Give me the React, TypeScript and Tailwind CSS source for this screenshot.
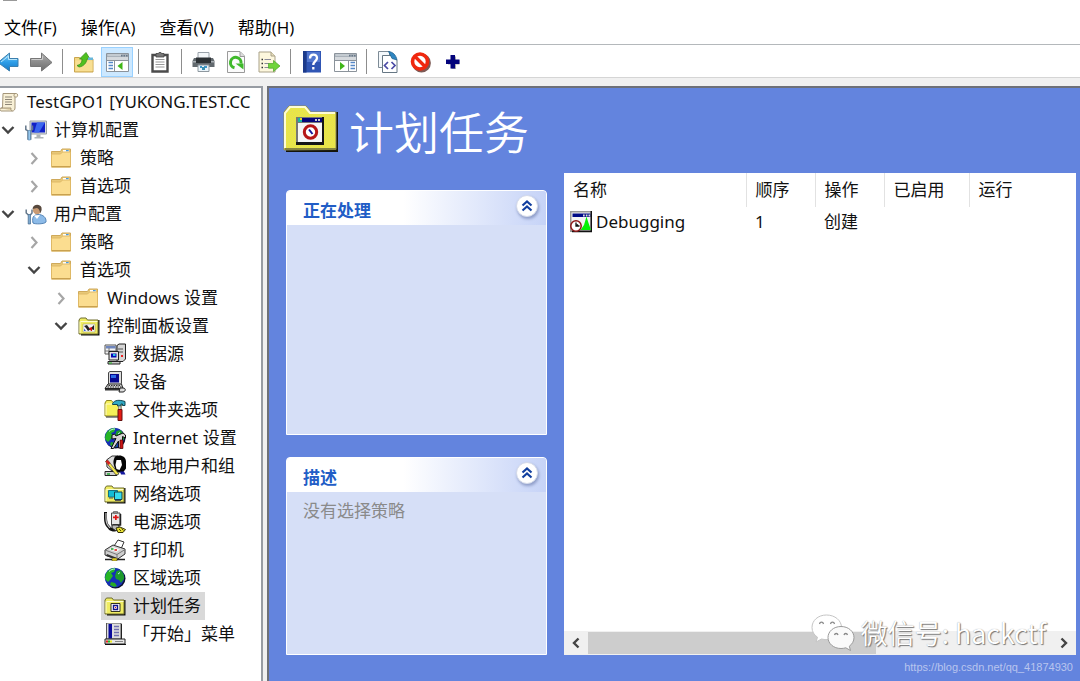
import React from "react";

type IconProps = { className?: string };

const Svg = ({ className = "size-[22px]", box = 22, children }: { className?: string; box?: number; children: React.ReactNode }) => (
  <svg viewBox={`0 0 ${box} ${box}`} className={`${className} shrink-0`} aria-hidden="true">
    {children}
  </svg>
);

/* ---------- toolbar icons ---------- */

const BackIcon = () => (
  <Svg>
    <defs>
      <linearGradient id="back" x1="0" y1="0" x2="0" y2="1">
        <stop offset="0" stopColor="#8fd3f7" />
        <stop offset="0.5" stopColor="#2f9fe8" />
        <stop offset="1" stopColor="#1777c4" />
      </linearGradient>
    </defs>
    <path d="M21 7.500v8h-8.500v4.500L1 11.500 12.500 2v5.500z" fill="url(#back)" stroke="#3b7fae" />
    <path d="M4 11 11.500 5v3.500H20" fill="none" stroke="#b9e6fb" />
  </Svg>
);

const ForwardIcon = () => (
  <Svg>
    <defs>
      <linearGradient id="fwd" x1="0" y1="0" x2="0" y2="1">
        <stop offset="0" stopColor="#b4b4b4" />
        <stop offset="0.5" stopColor="#8c8c8c" />
        <stop offset="1" stopColor="#6d6d6d" />
      </linearGradient>
    </defs>
    <path d="M.5 7.500v8h11V20L22 11.500 11.500 2v5.500z" fill="url(#fwd)" stroke="#777" />
    <path d="M1.500 8.500h11V5" fill="none" stroke="#ccc" />
  </Svg>
);

const UpFolderIcon = () => (
  <Svg>
    <path d="M1.500 6.500h5l2 1.500h11.500v13H1.500z" fill="#f3d680" stroke="#c9a54e" />
    <path d="M2.500 9.500h17v10.500h-17z" fill="#f8df93" />
    <path d="M4 14.500c4-1 5-3.500 5-6.500H6.500L13 1.500 17 8h-3c-.5 4-3.500 7.500-8 8z" fill="#4fc11f" stroke="#3b8f1e" strokeWidth=".8" />
    <path d="M15 6.500h5V9h-5z" fill="#69b6d9" />
  </Svg>
);

const PaneFrame = ({ flip }: { flip?: boolean }) => (
  <Svg className="size-[23px]" box={23}>
    <path d="M.5 3.500h22v18H.5z" fill="#fff" stroke="#8b939b" />
    <path d="M1 4h21v3.500H1z" fill="#a9b1b9" />
    <path d="M1.500 4.500H15v1H1.500z" fill="#dfe4e8" />
    <path d="M15 5h1.500v1.500H15zM17.500 5H19v1.500h-1.500zM20 5h1.500v1.500H20z" fill="#667788" />
    <path d="M1 8h21v2H1z" fill="#d5d9dd" />
    {flip ? (
      <>
        <path d="M14.500 10v11M1 10.500h21" stroke="#8b939b" />
        <path d="M6 12v8l5-4z" fill="#3fb618" />
        <path d="M16.500 12.500H21M16.500 15.500H21M16.500 18.500H21" stroke="#5689c8" strokeWidth="1.500" />
      </>
    ) : (
      <>
        <path d="M8.500 10v11M1 10.500h21" stroke="#8b939b" />
        <path d="M16.500 12v8l-5-4z" fill="#3fb618" />
        <path d="M2.500 12.500H7M2.500 15.500H7M2.500 18.500H7" stroke="#5689c8" strokeWidth="1.500" />
      </>
    )}
  </Svg>
);

const ClipboardIcon = () => (
  <Svg>
    <path d="M3.500 4h15v16.500h-15z" fill="#fff" stroke="#4b4b4b" strokeWidth="2.400" />
    <path d="M7 2.500h2.500l.5-1h2l.5 1H15V6H7z" fill="#777" stroke="#444" strokeWidth=".8" />
    <path d="M6.500 8.500h9M6.500 11h9M6.500 13.500h9M6.500 16h9" stroke="#999" />
  </Svg>
);

const PrinterIcon = () => (
  <Svg className="size-[23px]" box={23}>
    <path d="M6 2.500h11V10H6z" fill="#f4f7f9" stroke="#9aa2aa" />
    <path d="M2 8h19l1.500 3v6h-22v-6z" fill="#62696e" />
    <path d="M1 11h21v1.500H1z" fill="#aab0b5" />
    <path d="M4 7.500h15V13H4z" fill="#2c3134" />
    <path d="M6 15h11v6.500H6z" fill="#eaf4fa" stroke="#8e989f" />
    <path d="M8 16h2v2H8zM12 16h3v2h-3z" fill="#3f97c9" />
    <path d="M10 17h3v3h-3z" fill="#3a8fb0" />
  </Svg>
);

const RefreshIcon = () => (
  <Svg>
    <path d="M2.500 .500h12.500l4.500 4.500v16.500h-17z" fill="#fbfbfb" stroke="#9a9a9a" />
    <path d="M15 1v4.500h4.500" fill="#ddd" stroke="#9a9a9a" />
    <path d="M9.500 16.800A5.300 5.300 0 1 1 16 12.500" fill="none" stroke="#3fb92b" strokeWidth="3" />
    <path d="M10.500 12.500h8v6z" fill="#3fb92b" />
  </Svg>
);

const ExportIcon = () => (
  <Svg>
    <path d="M1 1h12l4 4v16H1z" fill="#fdf7dd" stroke="#a9a188" />
    <path d="M13 1v4h4" fill="#e6ddbb" stroke="#a9a188" />
    <path d="M3.500 8.500H5M3.500 12.500H5M3.500 16.500H5" stroke="#333" strokeWidth="1.400" />
    <path d="M6.500 8.500H13M6.500 12.500H11M6.500 16.500H12" stroke="#8a8a99" strokeWidth="1.200" />
    <path d="M10.500 12.500h5V9.500l6.500 5.500-6.500 5.500v-3.300h-5z" fill="#6fd43a" stroke="#4aa526" strokeWidth=".7" />
  </Svg>
);

const HelpIcon = () => (
  <Svg>
    <path d="M2 0h18v21.500H2z" fill="#2f55b4" />
    <path d="M2 0h3.500v21.500H2z" fill="#1c3a8a" />
    <path d="M6 1h13v10H6z" fill="#5277cf" />
    <path d="M9 7.500C9 2.500 16 2.500 16 7c0 3-3.700 3.300-3.700 7M12.300 16v2.400" fill="none" stroke="#fff" strokeWidth="2.300" />
  </Svg>
);

const CodeDocIcon = () => (
  <Svg>
    <path d="M1.500.5h11v16h-11z" fill="#f4f8fb" stroke="#7d8b96" />
    <path d="M5.500 4.500h10l4.500 4.500v12.500H5.500z" fill="#fff" stroke="#667784" />
    <path d="M11.500.500C16 1 19 4 20 9l-5-1.500z" fill="#2f86c2" stroke="#27648f" strokeWidth=".8" />
    <path d="m11 11-3.500 3.500L11 18M14.500 11l3.500 3.500-3.500 3.500" fill="none" stroke="#4a4aa5" strokeWidth="1.700" />
  </Svg>
);

const BanIcon = () => (
  <Svg>
    <circle cx="11.500" cy="12" r="7.800" fill="none" stroke="#7d5a55" strokeWidth="3.200" />
    <circle cx="10" cy="10.500" r="7.500" fill="#fff" stroke="#f0280f" strokeWidth="3.600" />
    <path d="m5 5.500 10 10" stroke="#f0280f" strokeWidth="3.400" />
  </Svg>
);

const PlusIcon = () => (
  <Svg>
    <path d="M8.500 5.500H13V9h3.500v4.500H13V18H8.500v-4.500H5V9h3.500z" fill="#aaa" />
    <path d="M7.500 4H12v4.500h4.500V13H12v4.500H7.500V13H3V8.500h4.500z" fill="#04047c" />
  </Svg>
);

/* ---------- tree icons ---------- */

const ScrollIcon = () => (
  <Svg className="size-5" box={20}>
    <path d="M3 1.500h13.500c1.500 0 1.500 3.500 0 3.500H15v11c0 1.500-1 3-2.500 3H1c-1.500-.5-1.500-3 0-3h1.500z" fill="#f8f0d6" stroke="#a4967a" />
    <path d="M14.500 2c-1 1-.5 3 .5 3" fill="none" stroke="#a4967a" />
    <path d="M1 16h10c-.5 1.500 0 3 1.500 3" fill="#e2d3aa" stroke="#a4967a" />
    <path d="M5 5h7M5 7.500h7M5 10h7M5 12.500h7" stroke="#8d8676" />
  </Svg>
);

const FolderIcon = () => (
  <Svg>
    <path d="M.5 4.500h9L11 2h8.500v18H.5z" fill="#e8c878" stroke="#cfa95a" />
    <path d="M12 3h6v2h-6z" fill="#fff" />
    <path d="M15 3h2.700v1.300H15z" fill="#4a9be0" />
    <path d="M.5 7h9l2-2h8v15H.5z" fill="#fbdd90" stroke="#dfb966" />
    <path d="M1 19.500h18.500" stroke="#c9a14f" />
  </Svg>
);

const ComputerIcon = () => (
  <Svg>
    <path d="M5 2h16.500v13H5z" fill="#d6dadd" stroke="#9aa1a6" />
    <path d="M6.500 3.500H20v10H6.500z" fill="#1020c8" />
    <path d="M12 3.500h8L14 13.500H9z" fill="#3a66ee" />
    <path d="M11.500 15.500h4V18h3v1.500h-9V18h2z" fill="#aeb4b7" />
    <path d="M.8 6.500v4L3 12v8h2.700v-8l1.800-1.500v-4" fill="none" stroke="#65788b" strokeWidth="1.500" />
    <path d="M3.200 11.500h2.200V21H3.200z" fill="#9ccdf2" stroke="#4f83b0" strokeWidth=".6" />
  </Svg>
);

const UserIcon = () => (
  <Svg>
    <path d="M8 20c-1.500-7 2-8.500 5-8.500 5 0 8.500 3 8 7.500-1 2-11 2.500-13 1z" fill="#8dbbe8" stroke="#5484b6" />
    <path d="m9 12.500 3 3.500 3-4z" fill="#fff" />
    <circle cx="12" cy="7" r="4.200" fill="#c99b74" />
    <path d="M7.500 6C8 1 15 .5 16.500 4.500c.5 3-.5 4.500-1.500 6 0-3-1-4.500-3-5.500z" fill="#57483d" />
    <path d="M1.200 6.500V10L3.500 12M7 6.500V10l-1.700 2" fill="none" stroke="#65788b" strokeWidth="1.500" />
    <path d="M3.200 11.500h2.300V21H3.200z" fill="#7da9cf" stroke="#42678b" strokeWidth=".7" />
  </Svg>
);

const YellowFolder = ({ children }: { children?: React.ReactNode }) => (
  <>
    <path d="M3 5h18.500v15.500H3z" fill="#111" />
    <path d="M1 19V5l1.500-2H8l1.500 2H20v14z" fill="#efec62" stroke="#6e6d30" />
    <path d="M2.500 6.500h17M2 6.500V18" stroke="#fdfdd0" />
    {children}
  </>
);

const ControlPanelIcon = () => (
  <Svg>
    <YellowFolder>
      <path d="M5 9h12v8H5z" fill="#f4f4f4" stroke="#99994f" strokeWidth=".5" />
      <path d="m6 11 3-1 3 4 4-4v5l-3-1-3 2-2-3z" fill="#222" />
      <path d="m11 13 2 3h1v-4z" fill="#d91111" />
      <path d="M6 13.500 8 16H6z" fill="#2b5bd7" />
    </YellowFolder>
  </Svg>
);

const DatabaseIcon = () => (
  <Svg>
    <path d="M1 2h11v9H1z" fill="#f4f4f4" stroke="#555" />
    <path d="M2 3h9.500v2.500H2z" fill="#6f86bd" />
    <path d="M1 8h11M5 5v6" stroke="#777" />
    <path d="M13 2.500 15 1h6.500v15L19 18.500h-6z" fill="#d5d5d5" stroke="#222" />
    <path d="M14 6h5M14 9h5" stroke="#555" />
    <path d="M17 12h2v2h-2z" fill="#e22" />
    <path d="M5 8.500h9.500v8.500H5z" fill="#e2e2e2" stroke="#222" />
    <path d="M7 10.500h5.500v4H7z" fill="#0808b4" />
    <path d="M9 11h2.500v2H9z" fill="#29c6e6" />
    <path d="M4 18.500h12v2.500H4z" fill="#c9c9c9" stroke="#222" />
    <path d="M5 20h3" stroke="#25bb25" />
  </Svg>
);

const DeviceIcon = () => (
  <Svg>
    <path d="M4.500 1.500 6 .5h11.500v12l-1.500 1.500H4.500z" fill="#ddd" stroke="#444" />
    <path d="M6 3h9v8.500H6z" fill="#07078f" />
    <path d="M7 4h5v3H7z" fill="#2a69e8" />
    <path d="M1 17.500 4 13h13.500l1.500 4.500H1z" fill="#d1d1d1" stroke="#222" />
    <path d="M4.500 14.500H17M3.500 16H18" stroke="#333" strokeDasharray="1.500 1" />
    <path d="M1 18h18v1.500H1z" fill="#333" />
    <path d="M16 17h3c3 0 3 3.500 0 4h-4z" fill="#ddd" stroke="#222" />
  </Svg>
);

const FolderOptionsIcon = () => (
  <Svg>
    <path d="M1 17V4l1.500-2.500h5L9 3.500h8V17z" fill="#f5f05a" stroke="#8e861c" />
    <path d="M2 5h14M2 5v11" stroke="#fffcc8" />
    <path d="M2 18h13" stroke="#222" />
    <path d="M8.500 4.500C10.500 1 15 .5 21 2.500v4h-2.500V5H17v2h-3.500V5.500H8.500z" fill="#31a9c4" stroke="#124650" />
    <path d="M14.500 7h2.500v5h-2.500z" fill="#ccc" stroke="#555" strokeWidth=".6" />
    <path d="M14 10.500h4v11h-4z" fill="#e31b13" stroke="#661010" />
  </Svg>
);

const Globe = () => (
  <>
    <circle cx="11.500" cy="11.500" r="10" fill="#0c1030" />
    <circle cx="10.500" cy="10.500" r="9.800" fill="#1430b8" />
    <path d="M1.500 8c2-5 6-7.500 10-6.500L10 5 7 6l2 3-3 4-2 2-3-3z" fill="#27b527" />
    <path d="m12.500 4 4-1c3 3 4 6 3.500 9l-3 4-2-3-3-1-1-3z" fill="#1d9a2c" />
    <path d="m7 15 4 1 2 3-3 1-4-2z" fill="#25aa25" />
    <path d="M5 4.500C7 2.500 9 2 11 2M14 7l2-1.500" fill="none" stroke="#bff7e2" />
  </>
);

const InternetIcon = () => (
  <Svg>
    <Globe />
    <path d="M8 12V8l2.500-1L12 9l7-3 2.500 2v3l-3-1.500V21h-4V14l-5 7.500H7l5-10z" fill="#d4d4d4" stroke="#111" />
    <path d="M16 13h3v8.500h-3z" fill="#cb1515" stroke="#400" strokeWidth=".6" />
  </Svg>
);

const UsersIcon = () => (
  <Svg>
    <path d="M2.500 5 8 1h6l-3 6 1 6-4 3-5-4z" fill="#ddd" stroke="#333" />
    <path d="M11 1.500c5-2.500 11-.5 11 5v7l-3 4h-7l-1-4c-1-3-3-6 0-12z" fill="#050505" />
    <path d="M12.500 5h4.500l1 5-2.500 5-3-1-1-4z" fill="#fff" />
    <path d="M1 16.500h10l2 4H1z" fill="#cfcfcf" stroke="#222" />
    <path d="M1.500 6.500 3.500 5 15 19l-3 1z" fill="#f5e94c" stroke="#333" strokeWidth=".7" />
    <path d="m1.500 6.500 2-1.500 3 3-2 2z" fill="#d32222" />
    <path d="M16 16.500h4l1.500 3H17z" fill="#1518a0" />
    <path d="M3 19h3" stroke="#26a835" strokeWidth="1.500" />
  </Svg>
);

const NetworkIcon = () => (
  <Svg>
    <YellowFolder>
      <path d="M4.500 7.500h9V14h-9z" fill="#12bcd4" stroke="#157080" />
      <path d="M10.500 9h7.500v7.500h-7.500z" fill="#35dced" stroke="#13414c" />
      <path d="M5 15h4M11 17.500h6" stroke="#555" />
    </YellowFolder>
  </Svg>
);

const PowerIcon = () => (
  <Svg>
    <path d="M1.500 1v6c0 8 3 8 4 10s3 2 6 2" fill="none" stroke="#111" strokeWidth="3" />
    <path d="M2 2v5c0 8 3 8 4 10" fill="none" stroke="#c8c8c8" strokeWidth="1.200" />
    <path d="M7.500 2h8.500v12H7.500z" fill="#e6e6e6" stroke="#444" />
    <path d="M9.500.5h4V2h-4z" fill="#aaa" stroke="#444" strokeWidth=".6" />
    <path d="M16.500 3v11H9" fill="none" stroke="#222" strokeWidth="1.500" />
    <path d="M11 4h1.700v1.500h2v1.700h-2V9H11V7.200H9V5.500h2z" fill="#de1515" />
    <path d="M8 14h6l2 3-4 3-4-3z" fill="#bbb" stroke="#222" />
    <path d="m12 17 4-1 5.500 2.500L19 21.500h-5z" fill="#e7df33" stroke="#35330d" />
    <path d="m15 18 2 2M17.500 17.500l2 2" stroke="#554f00" />
  </Svg>
);

const PrinterClassicIcon = () => (
  <Svg>
    <path d="m10 7 4-6 6 2-3 7z" fill="#fff" stroke="#333" />
    <path d="M1 11 9 6l12 4v5l-8 5.500L1 16z" fill="#cfcfcf" stroke="#333" />
    <path d="m1 11 12 4.500 8-5M13 15.500V20" fill="none" stroke="#777" />
    <path d="m3 15 9 3.500v2L2 17z" fill="#333" />
    <path d="M5 10.500 9 8l7 2.500L12.500 13z" fill="#f6f6f6" />
    <path d="M7 10h2.500" stroke="#27a935" strokeWidth="1.600" />
    <path d="M10.500 11H13" stroke="#d22" strokeWidth="1.600" />
    <path d="M1 20.500h20" stroke="#222" strokeWidth="1.500" />
    <path d="M8 19h5v3H8z" fill="#ddca20" stroke="#333" strokeWidth=".5" />
  </Svg>
);

const RegionIcon = () => (
  <Svg>
    <Globe />
  </Svg>
);

const TasksIcon = () => (
  <Svg>
    <YellowFolder>
      <path d="M7 8.500h9v8H7z" fill="#fff" stroke="#332" />
      <path d="M9.500 10.500h4v4h-4z" fill="#fff" stroke="#14148a" strokeWidth="1.400" />
      <path d="M11 12h1v1h-1z" fill="#d11" />
    </YellowFolder>
  </Svg>
);

const StartMenuIcon = () => (
  <Svg>
    <path d="M2.500 0H17v16H2.500z" fill="#dedede" stroke="#555" />
    <path d="M4.500 1H8v14.500H4.500z" fill="#0b0b9b" />
    <path d="M10 3.500h5M10 6.500h5M10 9.500h5M10 12.500h5" stroke="#7070b0" strokeWidth="1.400" />
    <path d="M17.500 1v15" stroke="#222" />
    <path d="M1 16h20v5H1z" fill="#e7e7e7" stroke="#222" />
    <path d="M2 17.500h2v2H2z" fill="#e22" />
    <path d="M4 17.500h2v2H4z" fill="#2b2" />
    <path d="M6 17.500h2v2H6z" fill="#ee2" />
    <path d="M11 18.500h8" stroke="#888" />
    <path d="M1 21.500h21" stroke="#111" />
  </Svg>
);

const TaskItemIcon = () => (
  <Svg>
    <path d="M0 0h22v21H0z" fill="#999" />
    <path d="M1.500 1.500h19V19h-19z" fill="#f4f4f4" />
    <path d="M2.500 2.500h18v3.500h-18z" fill="#000a86" />
    <path d="M13 3.500h1.700v2H13zM15.800 3.500h1.700v2h-1.700zM18.500 3.500H20v2h-1.500z" fill="#ddd" />
    <path d="M21.300 0v20.500H2" fill="none" stroke="#111" strokeWidth="1.500" />
    <path d="m16.500 5.500 1.500 5 3 8.500H10.500l3.500-5z" fill="#05f205" />
    <circle cx="6" cy="15" r="5.200" fill="#fff" stroke="#8d1616" strokeWidth="1.500" />
    <path d="M6 11.500V15h3.500M6 15l2-1.500" fill="none" stroke="#111" strokeWidth="1.300" />
  </Svg>
);

const BigTaskFolder = () => (
  <svg viewBox="0 0 56 50" className="h-[50px] w-14 shrink-0" aria-hidden="true">
    <defs>
      <pattern id="dither" width="2" height="2" patternUnits="userSpaceOnUse">
        <path d="M0 0h2v2H0z" fill="#f2ee34" />
        <path d="M0 0h1v1H0zM1 1h1v1H1z" fill="#dedb60" />
      </pattern>
    </defs>
    <path d="M3 8h52v40H3z" fill="#14140a" />
    <path d="M1 46V8l5-6h17l5 6h25v37.500z" fill="url(#dither)" stroke="#8d8b58" />
    <path d="M2 44V9l5-6h15l5 6h25" fill="none" stroke="#fdfcd6" strokeWidth="2" />
    <path d="M2 45h51" stroke="#86843f" strokeWidth="2" />
    <path d="M13 13h28v28H13z" fill="#151515" />
    <path d="M13 13h26v25H13z" fill="#777" />
    <path d="M15 14h24v4H15z" fill="#05057a" />
    <path d="M15 14h4v4h-4z" fill="#18b6a0" />
    <path d="M17 14h2v2h-2z" fill="#e7d823" />
    <path d="M32 15h2v2h-2zM35 15h2v2h-2z" fill="#ccc" />
    <path d="M15 19h24v19H15z" fill="#f6f6f6" />
    <circle cx="27.500" cy="28" r="6.200" fill="#fff" stroke="#b51616" strokeWidth="3" />
    <path d="m26 25.500 3.500 4.500" fill="none" stroke="#15159a" strokeWidth="2" />
  </svg>
);

/* ---------- shared parts ---------- */

const Chevron = ({ open }: { open: boolean }) => (
  <svg viewBox="0 0 16 16" className="size-4 shrink-0" aria-hidden="true">
    {open ? (
      <path d="m2.500 5 5.500 5.500L13.500 5" fill="none" stroke="#444" strokeWidth="2.400" />
    ) : (
      <path d="m5.500 3 5 5.500-5 5.500" fill="none" stroke="#a6a6a6" strokeWidth="2.200" />
    )}
  </svg>
);

type Node = { label: string; icon: React.FC<IconProps>; level: 0 | 1 | 2 | 3; open?: boolean; selected?: boolean };

const nodes: Node[] = [
  { label: "计算机配置", icon: ComputerIcon, level: 0, open: true },
  { label: "策略", icon: FolderIcon, level: 1, open: false },
  { label: "首选项", icon: FolderIcon, level: 1, open: false },
  { label: "用户配置", icon: UserIcon, level: 0, open: true },
  { label: "策略", icon: FolderIcon, level: 1, open: false },
  { label: "首选项", icon: FolderIcon, level: 1, open: true },
  { label: "Windows 设置", icon: FolderIcon, level: 2, open: false },
  { label: "控制面板设置", icon: ControlPanelIcon, level: 2, open: true },
  { label: "数据源", icon: DatabaseIcon, level: 3 },
  { label: "设备", icon: DeviceIcon, level: 3 },
  { label: "文件夹选项", icon: FolderOptionsIcon, level: 3 },
  { label: "Internet 设置", icon: InternetIcon, level: 3 },
  { label: "本地用户和组", icon: UsersIcon, level: 3 },
  { label: "网络选项", icon: NetworkIcon, level: 3 },
  { label: "电源选项", icon: PowerIcon, level: 3 },
  { label: "打印机", icon: PrinterClassicIcon, level: 3 },
  { label: "区域选项", icon: RegionIcon, level: 3 },
  { label: "计划任务", icon: TasksIcon, level: 3, selected: true },
  { label: "「开始」菜单", icon: StartMenuIcon, level: 3 },
];

const indents = ["pl-0", "pl-[26px]", "pl-[53px]", "pl-[79px]"];

const TreeRow = ({ node }: { node: Node }) => {
  const Icon = node.icon;
  return (
    <li className={`flex h-7 items-center gap-1.5 ${indents[node.level]}`}>
      {node.open === undefined ? (
        <span className="w-4 shrink-0" />
      ) : (
        <button type="button" aria-label={`${node.open ? "折叠" : "展开"} ${node.label}`} className="shrink-0">
          <Chevron open={node.open} />
        </button>
      )}
      <button
        type="button"
        className={`flex h-7 items-center gap-[7px] pr-1 pl-[3px] whitespace-nowrap ${node.selected ? "bg-[#d9d9d9]" : ""}`}
      >
        <Icon />
        <span>{node.label}</span>
      </button>
    </li>
  );
};

const tools: ({ label: string; icon: React.ReactNode; active?: boolean } | null)[] = [
  { label: "后退", icon: <BackIcon /> },
  { label: "前进", icon: <ForwardIcon /> },
  null,
  { label: "上一级", icon: <UpFolderIcon /> },
  { label: "显示/隐藏控制台树", icon: <PaneFrame />, active: true },
  null,
  { label: "粘贴", icon: <ClipboardIcon /> },
  null,
  { label: "打印", icon: <PrinterIcon /> },
  { label: "刷新", icon: <RefreshIcon /> },
  { label: "导出列表", icon: <ExportIcon /> },
  null,
  { label: "帮助", icon: <HelpIcon /> },
  { label: "显示/隐藏操作窗格", icon: <PaneFrame flip /> },
  null,
  { label: "显示 XML", icon: <CodeDocIcon /> },
  { label: "禁用", icon: <BanIcon /> },
  { label: "新建", icon: <PlusIcon /> },
];

const Panel = ({ title, className, children }: { title: string; className: string; children?: React.ReactNode }) => (
  <section className={`flex flex-col overflow-hidden rounded-t border border-white bg-[#d6dff7] ${className}`}>
    <header className="flex h-[34px] shrink-0 items-start justify-between bg-linear-to-r from-white from-45% to-[#c6d3f7] pr-2 pl-4">
      <h2 className="pt-2 text-[17px] leading-6 font-bold text-[#215dc6]">{title}</h2>
      <button
        type="button"
        aria-label={`折叠 ${title}`}
        className="mt-1 flex size-[22px] items-center justify-center rounded-full border border-[#d5dbea] bg-white shadow-[1px_2px_3px_#8f9dc8]"
      >
        <svg viewBox="0 0 14 14" className="size-[14px]" aria-hidden="true">
          <path d="m2.500 6.500 4.500-4 4.500 4M2.500 11.500l4.500-4 4.500 4" fill="none" stroke="#123f9f" strokeWidth="2.200" />
        </svg>
      </button>
    </header>
    <div className="px-4 pt-[7px] text-[17px] leading-6 text-[#8a8a8a]">{children}</div>
  </section>
);

const columns = ["名称", "顺序", "操作", "已启用", "运行"];

const ScrollArrow = ({ d }: { d: string }) => (
  <svg viewBox="0 0 12 12" className="size-3" aria-hidden="true">
    <path d={d} fill="none" stroke="#444" strokeWidth="2.400" />
  </svg>
);

export default function App() {
  return (
    <div className="flex min-h-screen flex-col bg-[#f0f0f0] font-['Noto_Sans','Noto_Sans_CJK_SC',sans-serif] text-[17px] text-[#111]">
      <div className="bg-white">
        <div className="ml-[3px] h-px w-3.5 bg-[#999]" />
        <nav className="flex h-[43px] items-end gap-6 px-1 pb-1 font-['Open_Sans','Noto_Sans_CJK_SC',sans-serif] leading-6 text-black">
          {["文件(F)", "操作(A)", "查看(V)", "帮助(H)"].map((m) => (
            <button key={m} type="button">
              {m}
            </button>
          ))}
        </nav>
        <div role="toolbar" className="flex h-[34px] items-center gap-px overflow-hidden border-t border-b border-t-[#b4b8bb] border-b-[#d5d5d5] pt-px">
          {tools.map((t, i) =>
            t ? (
              <button
                key={i}
                type="button"
                aria-label={t.label}
                className={`flex h-[30px] w-8 shrink-0 items-center justify-center first:-ml-2 ${
                  t.active ? "border border-[#99d1ff] bg-[#cce8ff]" : ""
                }`}
              >
                {t.icon}
              </button>
            ) : (
              <span key={i} className="mx-1 h-[25px] w-px shrink-0 bg-[#8d8d8d]" />
            ),
          )}
        </div>
      </div>

      <div className="flex flex-1 pt-2">
        <aside className="w-[263px] shrink-0 overflow-hidden border-t-2 border-r-2 border-[#979ca3] bg-white">
          <ul className="leading-7">
            <li className="flex h-7 items-center">
              <button type="button" className="flex items-center gap-[7px] whitespace-nowrap">
                <ScrollIcon />
                <span>TestGPO1 [YUKONG.TEST.CC</span>
              </button>
            </li>
            {nodes.map((n, i) => (
              <TreeRow key={i} node={n} />
            ))}
          </ul>
        </aside>

        <main className="relative ml-1 flex min-w-0 flex-1 gap-[17px] border-t-2 border-l-2 border-[#6d7078] bg-[#6384de] pr-1 pb-[26px] pl-[17px]">
          <div className="flex w-[261px] shrink-0 flex-col">
            <div className="-ml-[3px] flex h-[102px] items-start gap-2.5 pt-4">
              <BigTaskFolder />
              <h1 className="text-[45px] leading-[58px] font-[350] whitespace-nowrap text-white">计划任务</h1>
            </div>
            <Panel title="正在处理" className="h-[245px]" />
            <Panel title="描述" className="mt-[22px] flex-1">
              没有选择策略
            </Panel>
          </div>

          <div className="mt-[85px] flex min-w-0 flex-1 flex-col bg-white">
            <table className="w-full table-fixed border-collapse text-left">
              <colgroup>
                <col className="w-[182px]" />
                <col className="w-[69px]" />
                <col className="w-[69px]" />
                <col className="w-[85px]" />
                <col />
              </colgroup>
              <thead>
                <tr className="h-[34px]">
                  {columns.map((c) => (
                    <th key={c} scope="col" className="border-r border-[#e2e2e2] p-0 pl-[9px] leading-6 font-normal last:border-r-0">
                      {c}
                    </th>
                  ))}
                </tr>
              </thead>
              <tbody>
                <tr className="h-[30px]">
                  <td className="p-0 pl-1.5 leading-6">
                    <span className="flex items-center gap-1">
                      <TaskItemIcon />
                      Debugging
                    </span>
                  </td>
                  <td className="p-0 pl-[9px] leading-6">1</td>
                  <td className="p-0 pl-[9px] leading-6">创建</td>
                  <td />
                  <td />
                </tr>
              </tbody>
            </table>
            <div className="mt-auto flex h-6 items-stretch bg-[#f0f0f0]">
              <button type="button" aria-label="向左滚动" className="flex w-6 items-center justify-center">
                <ScrollArrow d="M8.500 1.500 4 6l4.500 4.500" />
              </button>
              <div className="flex flex-1">
                <div className="my-px w-[62%] bg-[#cdcdcd]" />
              </div>
              <button type="button" aria-label="向右滚动" className="flex w-6 items-center justify-center">
                <ScrollArrow d="M3.500 1.500 8 6l-4.500 4.500" />
              </button>
            </div>
          </div>

          <div className="pointer-events-none absolute right-[34px] bottom-7 flex items-center gap-1.5 font-['Noto_Sans_CJK_SC',sans-serif] text-[27px] leading-10 font-[350] whitespace-nowrap text-white">
            <svg viewBox="0 0 44 38" className="h-[38px] w-11" aria-hidden="true">
              <path d="M15.500 1C7 1 1 6.500 1 13.500c0 4 2 7.500 5.500 9.700L5 28l5.500-3c9 2.500 20-2 20-11.500C30.500 6.500 24 1 15.500 1z" fill="#fff" stroke="#c5c5c5" />
              <path d="M30 12.500c-7.500 0-13 5-13 11s5.500 11 13 11c1.700 0 3.300-.3 4.800-.7l4.700 2.700-1.200-4.300c2.900-2 4.700-5.200 4.700-8.700 0-6-5.500-11-13-11z" fill="#fafafa" stroke="#9b9b9b" />
              <path d="M8.500 10c.5-2.500 3.500-2.500 4 0M19.500 10c.5-2.500 3.500-2.500 4 0M23.500 21c.5-2 3-2 3.500 0M33 21c.5-2 3-2 3.500 0" fill="none" stroke="#888" strokeWidth="1.300" />
            </svg>
            <span className="[text-shadow:1px_1px_1px_#777,0_0_1px_#999]">微信号: hackctf</span>
          </div>
          <div className="absolute right-[7px] bottom-1.5 font-['Liberation_Sans',sans-serif] text-[11px] leading-4 text-[#b9c5ee]">
            https://blog.csdn.net/qq_41874930
          </div>
        </main>
      </div>
    </div>
  );
}
